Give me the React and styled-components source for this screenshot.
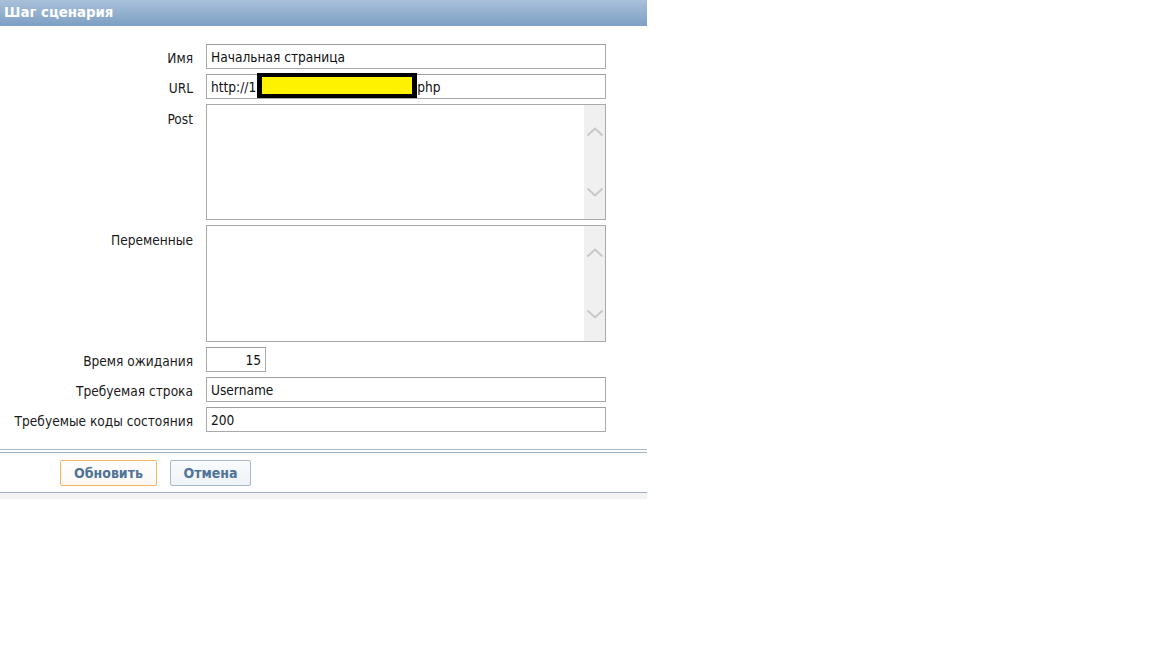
import React from "react";
import styled, { createGlobalStyle } from "styled-components";

const Global = createGlobalStyle`
  html, body { margin: 0; padding: 0; background: #fff; }
  body { font-family: "DejaVu Sans Condensed", "DejaVu Sans", sans-serif; font-stretch: condensed; }
`;

const Page = styled.div`
  width: 647px;
`;

const Header = styled.div`
  height: 26px;
  box-sizing: border-box;
  padding: 2px 0 0 4px;
  background: linear-gradient(to bottom, #a9c0d9 0%, #93b0cf 50%, #7c9fc3 100%);
  color: #fff;
  font-weight: bold;
  font-size: 14.8px;
  line-height: 20px;
`;

const Form = styled.div`
  display: grid;
  grid-template-columns: 193px 400px;
  column-gap: 13px;
  row-gap: 5px;
  padding-top: 18px;
`;

const Label = styled.div`
  text-align: right;
  font-size: 13.6px;
  color: #1a1a1a;
  height: ${(p) => (p.$top ? "auto" : "25px")};
  line-height: ${(p) => (p.$top ? "16px" : "28px")};
  padding-top: ${(p) => (p.$top ? "7px" : "0")};
  white-space: nowrap;
`;

const Field = styled.div`
  position: relative;
  box-sizing: border-box;
  height: 25px;
  width: ${(p) => p.$w || "400px"};
  border: 1px solid #a9a9a9;
  border-top-color: #9f9f9f;
  background: #fff;
  font-size: 13.6px;
  line-height: 25px;
  padding: 0 4px;
  color: #111;
  text-align: ${(p) => p.$align || "left"};
  white-space: nowrap;
`;

const Gap = styled.span`
  display: inline-block;
  width: ${(p) => p.$w}px;
`;

const Redaction = styled.div`
  position: absolute;
  left: 50px;
  top: -2px;
  width: 150px;
  height: 17px;
  background: #fff200;
  border: 5px solid #000;
  border-top-width: 4px;
  border-bottom-width: 4px;
`;

const AreaBox = styled.div`
  box-sizing: border-box;
  height: ${(p) => p.$h}px;
  width: 400px;
  border: 1px solid #a9a9a9;
  background: #fff;
  display: flex;
`;

const AreaText = styled.div`
  flex: 1;
`;

const ScrollTrack = styled.div`
  width: 21px;
  background: #f0f0f0;
  display: flex;
  flex-direction: column;
  justify-content: space-between;
  align-items: center;
  padding: 22px 0 22px;
`;

const Chevron = ({ up }) => (
  <svg width="18" height="10" viewBox="0 0 18 10">
    <path
      d={up ? "M1.5 8.5 L9 1.5 L16.5 8.5" : "M1.5 1.5 L9 8.5 L16.5 1.5"}
      fill="none"
      stroke="#c8c8c8"
      strokeWidth="2"
    />
  </svg>
);

const Footer = styled.div`
  margin-top: 17px;
  border-top: 1px solid #a7b9cc;
  padding-top: 2px;
`;

const FooterInner = styled.div`
  border-top: 1px solid #9fb2c6;
  border-bottom: 1px solid #a0b2c4;
  display: flex;
  gap: 13px;
  padding: 7px 0 6px 60px;
`;

const FooterShade = styled.div`
  height: 6px;
  background: #f3f3f3;
`;

const Button = styled.button`
  box-sizing: border-box;
  height: 26px;
  width: ${(p) => p.$w}px;
  font-family: inherit;
  font-stretch: condensed;
  font-size: 14px;
  font-weight: bold;
  color: #4f7397;
  border-radius: 2px;
  border: 1px solid ${(p) => (p.$primary ? "#f1b562" : "#a9b8c8")};
  background: ${(p) =>
    p.$primary
      ? "linear-gradient(#ffffff, #fbf8f3)"
      : "linear-gradient(#f9fbfd, #eef3f8)"};
  padding: 0;
  cursor: pointer;
`;

export default function App() {
  return (
    <Page>
      <Global />
      <Header>Шаг сценария</Header>
      <Form>
        <Label>Имя</Label>
        <Field>Начальная страница</Field>

        <Label>URL</Label>
        <Field>
          http://1<Gap $w={161} />php
          <Redaction />
        </Field>

        <Label $top>Post</Label>
        <AreaBox $h={116}>
          <AreaText />
          <ScrollTrack>
            <Chevron up />
            <Chevron />
          </ScrollTrack>
        </AreaBox>

        <Label $top>Переменные</Label>
        <AreaBox $h={117}>
          <AreaText />
          <ScrollTrack>
            <Chevron up />
            <Chevron />
          </ScrollTrack>
        </AreaBox>

        <Label>Время ожидания</Label>
        <Field $w="60px" $align="right">15</Field>

        <Label>Требуемая строка</Label>
        <Field>Username</Field>

        <Label>Требуемые коды состояния</Label>
        <Field>200</Field>
      </Form>
      <Footer>
        <FooterInner>
          <Button $primary $w={97}>Обновить</Button>
          <Button $w={81}>Отмена</Button>
        </FooterInner>
        <FooterShade />
      </Footer>
    </Page>
  );
}
